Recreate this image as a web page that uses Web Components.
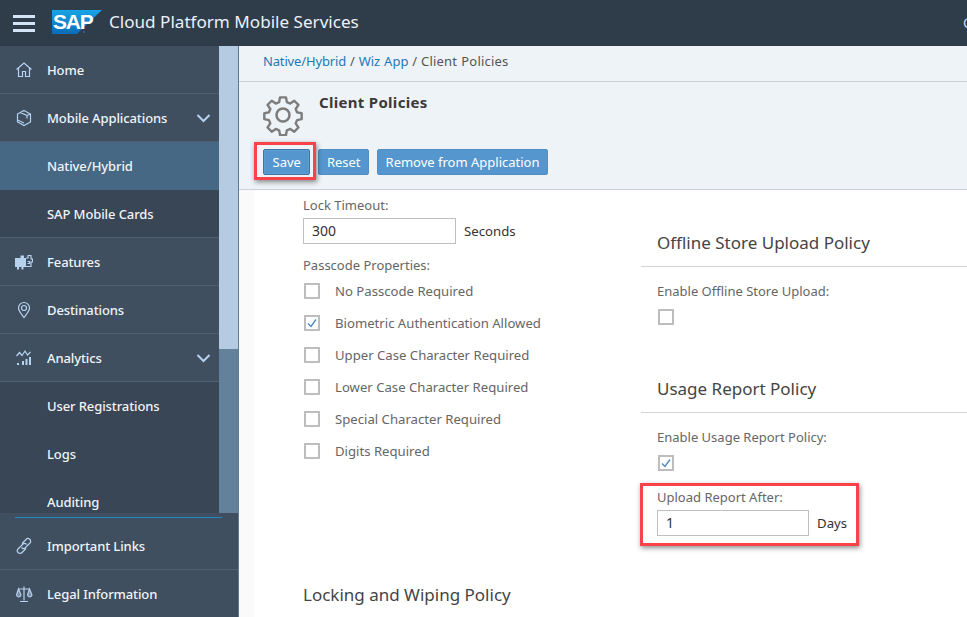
<!DOCTYPE html>
<html lang="en">
<head>
<meta charset="utf-8">
<title>Client Policies</title>
<style>
  html, body { margin: 0; height: 100%; overflow: hidden; }
  body { font-family: "Noto Sans", "Liberation Sans", sans-serif; background: #fff; }
</style>
</head>
<body>
<app-shell>
  <top-bar slot="top" title-text="Cloud Platform Mobile Services"></top-bar>

  <side-nav slot="side">
    <nav-item slot="list" icon="home">Home</nav-item>
    <nav-item slot="list" icon="box" arrow>Mobile Applications</nav-item>
    <nav-item slot="list" sub selected>Native/Hybrid</nav-item>
    <nav-item slot="list" sub>SAP Mobile Cards</nav-item>
    <nav-item slot="list" icon="puzzle">Features</nav-item>
    <nav-item slot="list" icon="pin">Destinations</nav-item>
    <nav-item slot="list" icon="chart" arrow>Analytics</nav-item>
    <nav-item slot="list" sub plain>User Registrations</nav-item>
    <nav-item slot="list" sub plain>Logs</nav-item>
    <nav-item slot="list" sub plain>Auditing</nav-item>
    <nav-item slot="foot" icon="link">Important Links</nav-item>
    <nav-item slot="foot" icon="scale" plain>Legal Information</nav-item>
  </side-nav>

  <bread-crumbs slot="crumbs"><a class="first">Native/Hybrid</a> / <a>Wiz App</a> / <span>Client Policies</span></bread-crumbs>

  <page-head slot="head" heading="Client Policies">
    <red-box x="9" top="7" bottom="5" after="6"><sap-button focused>Save</sap-button></red-box>
    <sap-button>Reset</sap-button>
    <sap-button>Remove from Application</sap-button>
  </page-head>

  <policy-form slot="body">
    <div slot="left">
      <field-row label="Lock Timeout:" value="300" unit="Seconds"></field-row>
      <check-list label="Passcode Properties:">
        <form-check text="No Passcode Required"></form-check>
        <form-check text="Biometric Authentication Allowed" checked></form-check>
        <form-check text="Upper Case Character Required"></form-check>
        <form-check text="Lower Case Character Required"></form-check>
        <form-check text="Special Character Required"></form-check>
        <form-check text="Digits Required"></form-check>
      </check-list>
      <section-title solo>Locking and Wiping Policy</section-title>
    </div>
    <div slot="right">
      <section-title>Offline Store Upload Policy</section-title>
      <check-field label="Enable Offline Store Upload:"></check-field>
      <section-title second>Usage Report Policy</section-title>
      <check-field label="Enable Usage Report Policy:" checked></check-field>
      <red-box x="1" top="5" bottom="10" after="12" class="upload">
        <field-row label="Upload Report After:" value="1" unit="Days" tight></field-row>
      </red-box>
    </div>
  </policy-form>
</app-shell>

<script>
const ICONS = {
  home: '<path d="M1.500 8.500 9 2l7.500 6.500M3.500 7v8.500h4v-5h3v5h4V7"/>',
  box: '<path d="M9 1.500 15.500 5v8L9 16.500 2.500 13V5zM5 3.500 12 6.500v3M12 6.500l3.500-1.500M2.500 11 9 14"/>',
  puzzle: '<path fill="currentColor" stroke="none" d="M0 5h5.500V2.500h3.500V5h2v9H8.500v2.500h-2V14H4v2.500H2V14H0z"/><path d="M11 5h2V2.500h3V6h1.500v3H16v4.500h-5M12.500 8.500h2v2h-2"/>',
  pin: '<path d="M9 16.500C6 12.500 3.500 10 3.500 7a5.500 5.500 0 0 1 11 0c0 3-2.500 5.500-5.500 9.500z"/><circle cx="9" cy="7" r="2.500"/>',
  chart: '<path d="M1.500 7 4.500 3.500 7 6.500 10 2l2.500 4 3-3"/><path fill="currentColor" stroke="none" d="M2 14h2v2H2zM7 12h2v4H7zM10.500 10h2v6h-2zM14 8h2v8h-2z"/>',
  link: '<path d="M7 6.500 11 2.500a2.600 2.600 0 0 1 4 3.500l-5 5a2.600 2.600 0 0 1-3.500-.5M11 11.500 7 15.500a2.600 2.600 0 0 1-4-3.500l5-5a2.600 2.600 0 0 1 3.500.5"/>',
  scale: '<path d="M9 1.500v14M5 16.500h8M3.500 4h11"/><path d="M3.500 4 1.500 10a2.300 2.300 0 0 0 4.500 0zM14.500 4l-2 6a2.300 2.300 0 0 0 4.500 0z" fill="currentColor" fill-opacity=".45"/>'
};

class AppShell extends HTMLElement {
  constructor() {
    super();
    this.attachShadow({ mode: "open" }).innerHTML = `
      <style>
        :host { display: flex; flex-direction: column; width: 967px; height: 617px; overflow: hidden; }
        .below { flex: 1; display: flex; min-height: 0; }
        main { flex: 1; min-width: 0; display: flex; flex-direction: column; background: #eef3f7; }
      </style>
      <slot name="top"></slot>
      <div class="below">
        <slot name="side"></slot>
        <main>
          <slot name="crumbs"></slot>
          <slot name="head"></slot>
          <slot name="body"></slot>
        </main>
      </div>
    `;
  }
}
customElements.define("app-shell", AppShell);

class TopBar extends HTMLElement {
  constructor() {
    super();
    this.attachShadow({ mode: "open" }).innerHTML = `
      <style>
        :host { display: flex; align-items: center; height: 46px; background: #2f3c4a; flex: none; }
        .burger { display: flex; flex-direction: column; gap: 4px; width: 22px; margin: 0 17px 0 13px; }
        .burger i { display: block; height: 3px; background: #d3e4f6; }
        .logo { position: relative; width: 50px; height: 24px; flex: none; margin-top: -2px; }
        .logo svg { display: block; }
        .logo span {
          position: absolute; left: 1px; top: 0; font: 700 21px/24px "Liberation Sans", sans-serif;
          letter-spacing: -1.200px; color: #fff;
        }
        h1 { margin: 0 0 2px 7px; font: 400 17.100px/24px "Noto Sans", sans-serif; color: #eaf1f8; white-space: nowrap; flex: 1; }
        .user { width: 4px; overflow: hidden; color: #bcd8f4; font-size: 14px; margin-bottom: 2px; }
      </style>
      <div class="burger"><i></i><i></i><i></i></div>
      <div class="logo">
        <svg width="50" height="24" viewBox="0 0 50 24">
          <defs><linearGradient id="g" x1="0" y1="0" x2="0" y2="1">
            <stop offset="0" stop-color="#18a5e6"/><stop offset="1" stop-color="#0a6bb8"/>
          </linearGradient></defs>
          <polygon points="0,0 50,0 25,24 0,24" fill="url(#g)"/>
          <circle cx="32" cy="22" r="1" fill="#1a6fb5"/>
        </svg>
        <span>SAP</span>
      </div>
      <h1>${this.getAttribute("title-text")}</h1>
      <span class="user">C</span>
    `;
  }
}
customElements.define("top-bar", TopBar);

class SideNav extends HTMLElement {
  constructor() {
    super();
    this.attachShadow({ mode: "open" }).innerHTML = `
      <style>
        :host { display: flex; flex-direction: column; width: 239px; flex: none; background: #3f4f5f; box-sizing: border-box; border-right: 1px solid #5d7a94; }
        .scroll { display: flex; height: 467px; flex: none; overflow: hidden; }
        .list { width: 219px; flex: none; }
        .track { width: 19px; background: #64819c; }
        .thumb { height: 303px; background: #b4cbe2; }
        .foot { flex: 1; position: relative; padding-top: 9px; }
        .foot::before { content: ""; position: absolute; left: 15px; top: 4px; width: 207px; height: 1px; background: #1f8ac4; }
      </style>
      <div class="scroll">
        <div class="list"><slot name="list"></slot></div>
        <div class="track"><div class="thumb"></div></div>
      </div>
      <div class="foot"><slot name="foot"></slot></div>
    `;
  }
}
customElements.define("side-nav", SideNav);

class NavItem extends HTMLElement {
  constructor() {
    super();
    const icon = ICONS[this.getAttribute("icon")];
    this.attachShadow({ mode: "open" }).innerHTML = `
      <style>
        :host {
          display: flex; align-items: center; box-sizing: border-box; height: 48px;
          background: #3f4f5f; border-bottom: 1px solid #51606f; color: #f0f4f8;
          font-size: 13px; font-weight: 500; padding-left: 15px; letter-spacing: -.1px;
        }
        :host([sub]) { background: #384655; padding-left: 47px; }
        :host([selected]) { background: #476884; border-bottom-color: #476884; }
        :host([plain]) { border-bottom: 0; }
        .icon { width: 18px; height: 18px; margin-right: 14px; color: #b7d2ee; flex: none; }
        svg { display: block; fill: none; stroke: currentColor; stroke-width: 1.200; }
        .label { flex: 1; white-space: nowrap; }
        .arrow { margin-right: 8px; }
        .arrow svg { stroke-width: 2; color: #b7d2ee; }
      </style>
      ${icon ? `<span class="icon"><svg width="18" height="18" viewBox="0 0 18 18">${icon}</svg></span>` : ""}
      <span class="label"><slot></slot></span>
      ${this.hasAttribute("arrow") ? `<span class="arrow"><svg width="15" height="10" viewBox="0 0 15 10"><path d="M1.500 2 7.500 8l6-6"/></svg></span>` : ""}
    `;
  }
}
customElements.define("nav-item", NavItem);

class BreadCrumbs extends HTMLElement {
  constructor() {
    super();
    this.attachShadow({ mode: "open" }).innerHTML = `
      <style>
        :host { display: block; box-sizing: border-box; height: 36px; padding: 6px 0 0 24px; border-bottom: 1px solid #cdd1d5; font-size: 13px; line-height: 18px; color: #555; white-space: nowrap; flex: none; word-spacing: .5px; }
        ::slotted(a) { color: #1c78ba; }
        ::slotted(a.first) { letter-spacing: -.15px; }
        ::slotted(span) { letter-spacing: .2px; }
      </style>
      <slot></slot>
    `;
  }
}
customElements.define("bread-crumbs", BreadCrumbs);

class PageHead extends HTMLElement {
  constructor() {
    super();
    this.attachShadow({ mode: "open" }).innerHTML = `
      <style>
        :host { display: block; box-sizing: border-box; height: 108px; padding: 12px 0 0 24px; border-bottom: 1px solid #cdd1d5; flex: none; }
        .top { display: flex; height: 55px; }
        svg { display: block; margin-right: 16px; }
        h2 { margin: 0; font: 700 15px/20px "Noto Sans", sans-serif; letter-spacing: .3px; color: #3a3a3a; position: relative; top: -2px; }
        .actions { display: flex; gap: 8px; }
      </style>
      <div class="top">
        <svg width="40" height="42" viewBox="0 0 40 42" fill="none" stroke="#7d7d7d" stroke-width="2.600" stroke-linejoin="round">
          <path d="M16.800 2h6.400l1 5.200 3.600 1.500 4.400-3 4.500 4.500-3 4.400 1.500 3.600 5 1v6.400l-5 1-1.500 3.600 3 4.400-4.500 4.500-4.400-3-3.600 1.500-1 5.200h-6.400l-1-5.200-3.600-1.500-4.400 3-4.500-4.500 3-4.400-1.500-3.600-5-1v-6.400l5-1 1.500-3.600-3-4.400 4.500-4.500 4.400 3 3.600-1.500z" transform="translate(1.500 1.500) scale(.925)"/>
          <circle cx="20" cy="21" r="6.500"/>
        </svg>
        <h2>${this.getAttribute("heading")}</h2>
      </div>
      <div class="actions"><slot></slot></div>
    `;
  }
}
customElements.define("page-head", PageHead);

class SapButton extends HTMLElement {
  constructor() {
    super();
    this.attachShadow({ mode: "open" }).innerHTML = `
      <style>
        :host { display: inline-flex; align-items: center; box-sizing: border-box; height: 26px; padding: 0 7.500px; background: #5496cd; border: 1px solid #4f8fc4; border-radius: 2px; color: #fff; font-size: 13px; white-space: nowrap; }
        :host([focused]) { padding: 0 8.500px; border-color: #3f74a3; box-shadow: inset 0 0 0 1px #5c9dd3; }
      </style>
      <slot></slot>
    `;
  }
}
customElements.define("sap-button", SapButton);

// red callout from the screenshot, sits over whatever it wraps
class RedBox extends HTMLElement {
  constructor() {
    super();
    const x = this.getAttribute("x");
    const top = this.getAttribute("top");
    const bottom = this.getAttribute("bottom");
    const after = this.getAttribute("after") || 0;
    this.attachShadow({ mode: "open" }).innerHTML = `
      <style>
        :host { display: block; position: relative; width: fit-content; }
        :host(.upload) { margin-top: 17px; }
        .mark {
          position: absolute; left: -${x}px; right: -${after}px; top: -${top}px; bottom: -${bottom}px;
          border: 3px solid #f9424a; box-shadow: 1px 2px 5px rgba(0,0,0,.45); pointer-events: none;
        }
      </style>
      <slot></slot>
      <div class="mark"></div>
    `;
  }
}
customElements.define("red-box", RedBox);

class PolicyForm extends HTMLElement {
  constructor() {
    super();
    this.attachShadow({ mode: "open" }).innerHTML = `
      <style>
        :host { display: block; flex: 1; min-height: 0; overflow: hidden; background: #fafafa; padding-left: 15px; }
        .sheet { display: grid; grid-template-columns: 387px 1fr; height: 100%; background: #fff; }
        .left { padding: 6px 0 0 49px; }
        .right { padding-top: 41px; }
      </style>
      <div class="sheet">
        <div class="left"><slot name="left"></slot></div>
        <div class="right"><slot name="right"></slot></div>
      </div>
    `;
  }
}
customElements.define("policy-form", PolicyForm);

class FieldRow extends HTMLElement {
  constructor() {
    super();
    this.attachShadow({ mode: "open" }).innerHTML = `
      <style>
        :host { display: block; }
        label { display: block; font-size: 13px; line-height: 18px; color: #666; margin-bottom: 4px; }
        .row { display: flex; align-items: center; gap: 8px; }
        .input { box-sizing: border-box; width: 153px; height: 26px; border: 1px solid #bfbfbf; background: #fff; padding-left: 8px; font-size: 14px; line-height: 24px; color: #333; }
        .unit { font-size: 13.200px; color: #333; }
        :host([tight]) { padding-left: 16px; }
        :host([tight]) .input { width: 152px; }
      </style>
      <label>${this.getAttribute("label")}</label>
      <div class="row">
        <div class="input">${this.getAttribute("value")}</div>
        <span class="unit">${this.getAttribute("unit")}</span>
      </div>
    `;
  }
}
customElements.define("field-row", FieldRow);

class CheckBox extends HTMLElement {
  constructor() {
    super();
    this.attachShadow({ mode: "open" }).innerHTML = `
      <style>
        :host { display: block; box-sizing: border-box; width: 16px; height: 16px; border: 2px solid #bdbdbd; background: #fff; flex: none; }
        svg { display: block; }
      </style>
      ${this.hasAttribute("checked") ? `<svg width="12" height="12" viewBox="0 0 12 12" fill="none" stroke="#4a86bf" stroke-width="1.300"><path d="M2 6.500 5 9.500 10 2.500"/></svg>` : ""}
    `;
  }
}
customElements.define("check-box", CheckBox);

class FormCheck extends HTMLElement {
  constructor() {
    super();
    this.attachShadow({ mode: "open" }).innerHTML = `
      <style>
        :host { display: flex; align-items: center; height: 32px; padding-left: 1px; font-size: 13.150px; color: #666; white-space: nowrap; }
        check-box { margin-right: 15px; }
      </style>
      <check-box ${this.hasAttribute("checked") ? "checked" : ""}></check-box>
      <span>${this.getAttribute("text")}</span>
    `;
  }
}
customElements.define("form-check", FormCheck);

class CheckList extends HTMLElement {
  constructor() {
    super();
    this.attachShadow({ mode: "open" }).innerHTML = `
      <style>
        :host { display: block; margin-top: 12px; }
        label { display: block; font-size: 13px; line-height: 18px; color: #666; margin-bottom: 1px; }
      </style>
      <label>${this.getAttribute("label")}</label>
      <slot></slot>
    `;
  }
}
customElements.define("check-list", CheckList);

class CheckField extends HTMLElement {
  constructor() {
    super();
    this.attachShadow({ mode: "open" }).innerHTML = `
      <style>
        :host { display: block; padding: 15px 0 0 16px; }
        label { display: block; font-size: 13px; line-height: 18px; color: #666; margin-bottom: 9px; }
        check-box { margin-left: 1px; }
      </style>
      <label>${this.getAttribute("label")}</label>
      <check-box ${this.hasAttribute("checked") ? "checked" : ""}></check-box>
    `;
  }
}
customElements.define("check-field", CheckField);

class SectionTitle extends HTMLElement {
  constructor() {
    super();
    this.attachShadow({ mode: "open" }).innerHTML = `
      <style>
        :host { display: block; box-sizing: border-box; height: 36px; padding-left: 16px; border-bottom: 1px solid #d4d4d4; font-size: 17px; line-height: 24px; color: #444; white-space: nowrap; }
        :host([second]) { margin-top: 52px; }
        :host([solo]) { border: 0; padding-left: 0; margin-top: 116px; }
      </style>
      <slot></slot>
    `;
  }
}
customElements.define("section-title", SectionTitle);
</script>
</body>
</html>
